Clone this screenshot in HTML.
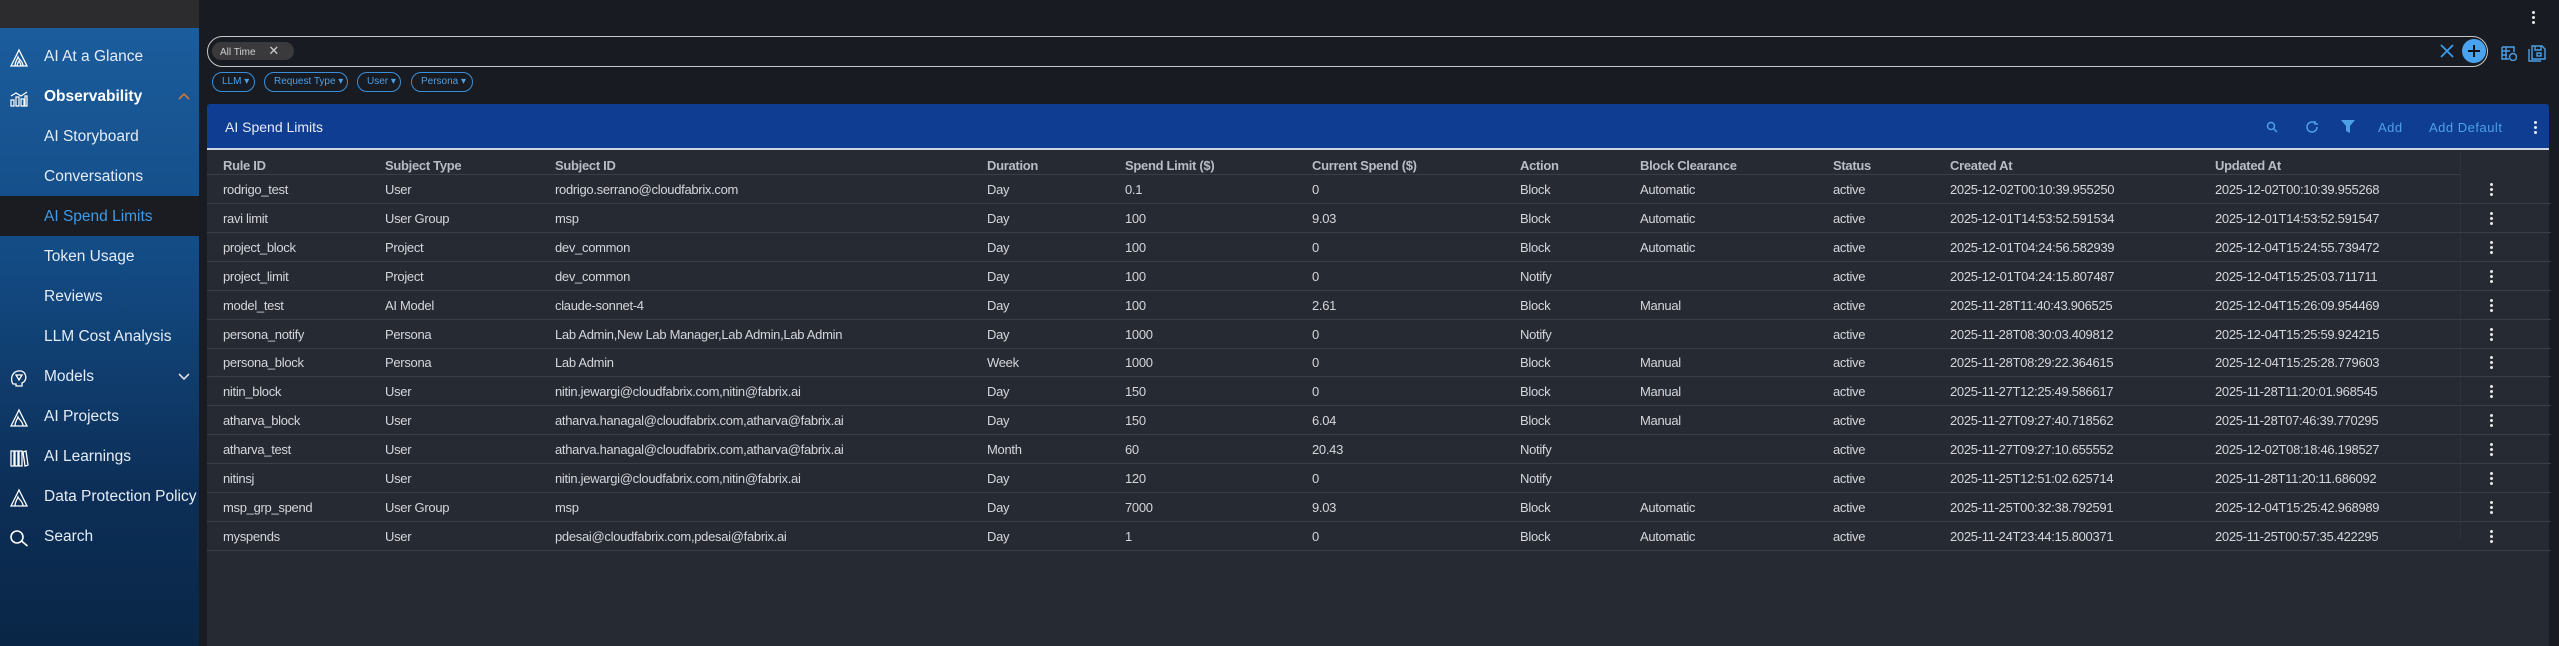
<!DOCTYPE html>
<html><head><meta charset="utf-8"><style>
*{margin:0;padding:0;box-sizing:border-box}
body{width:2559px;height:646px;overflow:hidden;background:#181b21;font-family:"Liberation Sans",sans-serif;position:relative;color:#d6d8dc}
.sb{position:absolute;left:0;top:0;width:199px;height:646px;background:linear-gradient(#1b5c9c 5%,#134b84 40%,#0c2f58 75%,#0a2646)}
.sbtop{position:absolute;left:0;top:0;width:199px;height:28px;background:#2c2c2e}
.it{position:absolute;left:0;width:199px;height:40px;line-height:40px;font-size:15.5px;color:#e4ecf5;padding-left:44px}
.it svg{position:absolute;left:9px;top:11px}
.act{background:#1a1c22;color:#3d9be9}
.sbar{position:absolute;left:207px;top:36px;width:2281px;height:31px;border:1.5px solid #c9c9c9;border-radius:16px}
.chip{position:absolute;left:212px;top:42px;width:82px;height:18px;background:#3a3a3c;border-radius:9px;font-size:10px;color:#cfcfcf;line-height:18px;padding-left:8px}
.fc{position:absolute;top:72px;height:20px;border:1.5px solid #3a8fd8;border-radius:10px;font-size:10px;color:#4da0e6;line-height:17px;padding-left:9px}
.hdr{position:absolute;left:207px;top:104px;width:2342px;height:46px;background:#0f3d91;border-radius:3px 3px 0 0;border-bottom:2px solid #cfd6e6}
.tbl{position:absolute;left:207px;top:150px;width:2342px;height:496px;background:#262a33}
.row{position:absolute;left:207px;width:2344px;height:29px;border-bottom:1px solid #3a3e48;font-size:13px;letter-spacing:-0.3px;color:#d4d6da}
.row span{position:absolute;top:7px;white-space:nowrap}
.hrow{font-weight:bold;color:#b8bcc4}
.k{position:absolute;width:3px;height:3px;background:#e8e8e8;border-radius:50%}
.ha{position:absolute;top:120px;font-size:13px;color:#4da0e6;letter-spacing:0.5px}
</style></head><body>
<div class="sb"></div><div class="sbtop"></div>
<div class="it" style="top:37px"><svg width="20" height="20" viewBox="0 0 20 20" fill="none" stroke="#fff" stroke-width="1.3"><path d="M2 18L10 2l8 16zM6 18c0-4 2-6 3-9 1 3 5 4 5 9M8 18c0-2 1-3 2-5 1 2 2 3 2 5"/></svg>AI At a Glance</div>
<div class="it" style="top:77px;font-weight:bold;color:#fff"><svg width="20" height="20" viewBox="0 0 20 20" fill="none" stroke="#fff" stroke-width="1.2"><path d="M2 12h3v6H2zM7 9h3v9H7zM12 11h3v7h-3zM16 8h2v10h-2zM2 8l5-3 5 3 6-4"/></svg>Observability<svg style="left:178px;top:15px" width="12" height="8" viewBox="0 0 12 8" fill="none" stroke="#c8773a" stroke-width="1.6"><path d="M1 7l5-5 5 5"/></svg></div>
<div class="it" style="top:117px">AI Storyboard</div>
<div class="it" style="top:157px">Conversations</div>
<div class="it act" style="top:196px;line-height:42px">AI Spend Limits</div>
<div class="it" style="top:237px">Token Usage</div>
<div class="it" style="top:277px">Reviews</div>
<div class="it" style="top:317px">LLM Cost Analysis</div>
<div class="it" style="top:357px"><svg width="20" height="20" viewBox="0 0 20 20" fill="none" stroke="#fff" stroke-width="1.3"><path d="M4 16c-2-3-2-8 1-11 3-3 9-3 11 1 2 4 0 8-3 9v3H7v-2H4zM7 7l3 5 3-5z"/></svg>Models<svg style="left:178px;top:16px" width="12" height="8" viewBox="0 0 12 8" fill="none" stroke="#ddd" stroke-width="1.6"><path d="M1 1l5 5 5-5"/></svg></div>
<div class="it" style="top:397px"><svg width="20" height="20" viewBox="0 0 20 20" fill="none" stroke="#fff" stroke-width="1.3"><path d="M2 18L10 2l8 16zM6 18c0-4 2-6 3-9 1 3 5 4 5 9"/></svg>AI Projects</div>
<div class="it" style="top:437px"><svg width="20" height="20" viewBox="0 0 20 20" fill="none" stroke="#fff" stroke-width="1.3"><path d="M2 3h3v15H2zM6 3h3v15H6zM10 3h3v15h-3zM14 4l3-1 2 14-3 1z"/></svg>AI Learnings</div>
<div class="it" style="top:477px"><svg width="20" height="20" viewBox="0 0 20 20" fill="none" stroke="#fff" stroke-width="1.3"><path d="M2 18L10 2l8 16zM6 18c0-4 2-6 3-9 1 3 5 4 5 9"/></svg>Data Protection Policy</div>
<div class="it" style="top:517px"><svg width="20" height="20" viewBox="0 0 20 20" fill="none" stroke="#fff" stroke-width="1.6"><circle cx="8" cy="9" r="6"/><path d="M12.5 13l6 5"/></svg>Search</div>

<div class="k" style="left:2532px;top:11px"></div><div class="k" style="left:2532px;top:16px"></div><div class="k" style="left:2532px;top:21px"></div>
<div class="sbar"></div>
<div class="chip">All Time <span style="margin-left:10px;font-size:13px">✕</span></div>
<svg style="position:absolute;left:2440px;top:44px" width="14" height="14" viewBox="0 0 14 14" stroke="#3d9be9" stroke-width="1.8"><path d="M1 1l12 12M13 1L1 13"/></svg>
<svg style="position:absolute;left:2462px;top:39px" width="24" height="24" viewBox="0 0 24 24"><circle cx="12" cy="12" r="12" fill="#4aa3ee"/><path d="M12 6v12M6 12h12" stroke="#111" stroke-width="2"/></svg>
<svg style="position:absolute;left:2501px;top:45px" width="16" height="16" viewBox="0 0 16 16" fill="none" stroke="#4da0e6" stroke-width="1.4"><path d="M1 2h12v5M1 2v12h7M1 6h8M1 10h5M5 2v12"/><circle cx="12" cy="12" r="3.5"/></svg>
<svg style="position:absolute;left:2528px;top:44px" width="18" height="18" viewBox="0 0 18 18" fill="none" stroke="#4da0e6" stroke-width="1.4"><path d="M4 2h10l3 3v10H4zM1 5v12h12M7 2v4h6V2"/><rect x="9" y="9" width="4" height="3"/></svg>
<div class="fc" style="left:212px;width:43px">LLM ▾</div>
<div class="fc" style="left:264px;width:84px">Request Type ▾</div>
<div class="fc" style="left:357px;width:44px">User ▾</div>
<div class="fc" style="left:411px;width:62px">Persona ▾</div>

<div class="tbl"></div>
<div class="hdr"><div style="position:absolute;left:18px;top:15px;font-size:14px;color:#e6ebf5">AI Spend Limits</div></div>
<svg style="position:absolute;left:2266px;top:121px" width="12" height="12" viewBox="0 0 12 12" fill="none" stroke="#4da0e6" stroke-width="1.5"><circle cx="5" cy="5" r="3.5"/><path d="M7.5 7.5l3.5 3.5"/></svg>
<svg style="position:absolute;left:2305px;top:120px" width="14" height="14" viewBox="0 0 14 14" fill="none" stroke="#4da0e6" stroke-width="1.5"><path d="M12 7a5 5 0 1 1-2-4M10 1v3h3"/></svg>
<svg style="position:absolute;left:2341px;top:119px" width="14" height="15" viewBox="0 0 14 15" fill="#4da0e6"><path d="M0 1h14L9 7v7l-4-2V7z"/></svg>
<div class="ha" style="left:2378px">Add</div>
<div class="ha" style="left:2429px">Add Default</div>
<div class="k" style="left:2534px;top:121px"></div><div class="k" style="left:2534px;top:126px"></div><div class="k" style="left:2534px;top:131px"></div>

<div class="row hrow" style="top:152px;width:2253px;height:23px"><span style="top:6px;left:16px">Rule ID</span><span style="top:6px;left:178px">Subject Type</span><span style="top:6px;left:348px">Subject ID</span><span style="top:6px;left:780px">Duration</span><span style="top:6px;left:918px">Spend Limit ($)</span><span style="top:6px;left:1105px">Current Spend ($)</span><span style="top:6px;left:1313px">Action</span><span style="top:6px;left:1433px">Block Clearance</span><span style="top:6px;left:1626px">Status</span><span style="top:6px;left:1743px">Created At</span><span style="top:6px;left:2008px">Updated At</span></div>
<div style="position:absolute;left:2460px;top:152px;width:1px;height:388px;background:#2e323b"></div>

<div id="rows"></div>
<script>
var d=[
["rodrigo_test","User","rodrigo.serrano@cloudfabrix.com","Day","0.1","0","Block","Automatic","2025-12-02T00:10:39.955250","2025-12-02T00:10:39.955268"],
["ravi limit","User Group","msp","Day","100","9.03","Block","Automatic","2025-12-01T14:53:52.591534","2025-12-01T14:53:52.591547"],
["project_block","Project","dev_common","Day","100","0","Block","Automatic","2025-12-01T04:24:56.582939","2025-12-04T15:24:55.739472"],
["project_limit","Project","dev_common","Day","100","0","Notify","","2025-12-01T04:24:15.807487","2025-12-04T15:25:03.711711"],
["model_test","AI Model","claude-sonnet-4","Day","100","2.61","Block","Manual","2025-11-28T11:40:43.906525","2025-12-04T15:26:09.954469"],
["persona_notify","Persona","Lab Admin,New Lab Manager,Lab Admin,Lab Admin","Day","1000","0","Notify","","2025-11-28T08:30:03.409812","2025-12-04T15:25:59.924215"],
["persona_block","Persona","Lab Admin","Week","1000","0","Block","Manual","2025-11-28T08:29:22.364615","2025-12-04T15:25:28.779603"],
["nitin_block","User","nitin.jewargi@cloudfabrix.com,nitin@fabrix.ai","Day","150","0","Block","Manual","2025-11-27T12:25:49.586617","2025-11-28T11:20:01.968545"],
["atharva_block","User","atharva.hanagal@cloudfabrix.com,atharva@fabrix.ai","Day","150","6.04","Block","Manual","2025-11-27T09:27:40.718562","2025-11-28T07:46:39.770295"],
["atharva_test","User","atharva.hanagal@cloudfabrix.com,atharva@fabrix.ai","Month","60","20.43","Notify","","2025-11-27T09:27:10.655552","2025-12-02T08:18:46.198527"],
["nitinsj","User","nitin.jewargi@cloudfabrix.com,nitin@fabrix.ai","Day","120","0","Notify","","2025-11-25T12:51:02.625714","2025-11-28T11:20:11.686092"],
["msp_grp_spend","User Group","msp","Day","7000","9.03","Block","Automatic","2025-11-25T00:32:38.792591","2025-12-04T15:25:42.968989"],
["myspends","User","pdesai@cloudfabrix.com,pdesai@fabrix.ai","Day","1","0","Block","Automatic","2025-11-24T23:44:15.800371","2025-11-25T00:57:35.422295"]];
var x=[16,178,348,780,918,1105,1313,1433,1743,2008],h="";
d.forEach(function(r,i){var t=175+i*28.9;h+='<div class="row" style="top:'+t+'px">';
for(var j=0;j<8;j++)h+='<span style="left:'+x[j]+'px">'+r[j]+'</span>';
h+='<span style="left:1626px">active</span><span style="left:1743px">'+r[8]+'</span><span style="left:2008px">'+r[9]+'</span>';
h+='<i class="k" style="left:2283px;top:8px"></i><i class="k" style="left:2283px;top:13px"></i><i class="k" style="left:2283px;top:18px"></i></div>';});
document.getElementById("rows").innerHTML=h;
</script>
</body></html>
